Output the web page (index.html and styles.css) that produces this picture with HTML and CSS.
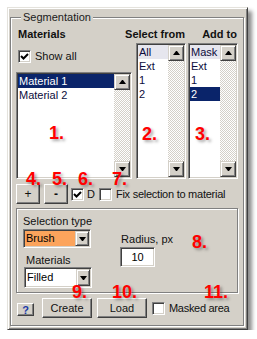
FILE: index.html
```html
<!DOCTYPE html>
<html>
<head>
<meta charset="utf-8">
<link rel="stylesheet" href="styles.css">
</head>
<body>
<div class="window">
  <div class="group">
    <div class="legend">Segmentation</div>
    <div class="top">
      <div class="col col-mat">
        <div class="hdr">Materials</div>
        <div class="chk-row show-all"><span class="cb"><svg width="9" height="9" viewBox="0 0 9 9"><path d="M1 4 L3.5 6.5 L8 2" fill="none" stroke="#000" stroke-width="2"/></svg></span><span class="chk-text">Show all</span></div>
        <div class="listbox lb-mat">
          <div class="items">
            <div class="item sel">Material 1</div>
            <div class="item">Material 2</div>
          </div>
          <div class="sb"><div class="sbtn"><span class="arr-up"></span></div><div class="track"></div><div class="sbtn"><span class="arr-down"></span></div></div>
        </div>
      </div>
      <div class="col col-sm">
        <div class="hdr hdr-r">Select from</div>
        <div class="listbox lb-r">
          <div class="items">
            <div class="item faint">All</div>
            <div class="item">Ext</div>
            <div class="item">1</div>
            <div class="item">2</div>
          </div>
          <div class="sb"><div class="sbtn"><span class="arr-up"></span></div><div class="track"></div><div class="sbtn"><span class="arr-down"></span></div></div>
        </div>
      </div>
      <div class="col col-at">
        <div class="hdr hdr-r">Add to</div>
        <div class="listbox lb-r">
          <div class="items">
            <div class="item faint">Mask</div>
            <div class="item">Ext</div>
            <div class="item">1</div>
            <div class="item sel">2</div>
          </div>
          <div class="sb"><div class="sbtn"><span class="arr-up"></span></div><div class="track"></div><div class="sbtn"><span class="arr-down"></span></div></div>
        </div>
      </div>
    </div>
    <div class="btnrow">
      <div class="btn btn-sq">+</div>
      <div class="btn btn-sq btn-minus">-</div>
      <span class="cb cb-d"><svg width="9" height="9" viewBox="0 0 9 9"><path d="M1 4 L3.5 6.5 L8 2" fill="none" stroke="#000" stroke-width="2"/></svg></span>
      <span class="chk-text d-text">D</span>
      <span class="cb cb-fix"></span>
      <span class="chk-text fix-text">Fix selection to material</span>
    </div>
    <div class="inner">
      <div class="inner-left">
        <div class="lbl">Selection type</div>
        <div class="combo combo-brush"><span class="combo-val">Brush</span><div class="cbtn"><span class="arr-down"></span></div></div>
        <div class="lbl lbl-mat">Materials</div>
        <div class="combo combo-filled"><span class="combo-val">Filled</span><div class="cbtn"><span class="arr-down"></span></div></div>
      </div>
      <div class="inner-right">
        <div class="lbl lbl-rad">Radius, px</div>
        <div class="input">10</div>
      </div>
    </div>
    <div class="bottom">
      <div class="btn btn-help">?</div>
      <div class="btn btn-wide btn-create">Create</div>
      <div class="btn btn-wide btn-load">Load</div>
      <div class="masked"><span class="cb"></span><span class="chk-text masked-text">Masked area</span></div>
    </div>
  </div>
  <div class="notes">
    <span class="note n1">1.</span>
    <span class="note n2">2.</span>
    <span class="note n3">3.</span>
    <span class="note n4">4.</span>
    <span class="note n5">5.</span>
    <span class="note n6">6.</span>
    <span class="note n7">7.</span>
    <span class="note n8">8.</span>
    <span class="note n9">9.</span>
    <span class="note n10">10.</span>
    <span class="note n11">11.</span>
  </div>
</div>
</body>
</html>
```
FILE: styles.css
```css
html, body {
  margin: 0;
  padding: 0;
  background: #ffffff;
}
body {
  font-family: "Liberation Sans", Arial, sans-serif;
  font-size: 11px;
  color: #000;
}
.window {
  position: relative;
  box-sizing: border-box;
  margin: 7px 0 0 7px;
  width: 241px;
  height: 323px;
  background: #d4d0c8;
  border: 1px solid;
  border-color: #e4e2dc #404040 #404040 #e4e2dc;
  box-shadow: inset 1px 1px 0 #fff, inset -1px -1px 0 #808080, 4px 4px 4px rgba(0,0,0,0.45);
  padding: 9px 2px 0 2px;
}
.group {
  box-sizing: border-box;
  width: 234px;
  height: 309px;
  border: 1px solid #808080;
  box-shadow: inset 1px 1px 0 #fff, 1px 1px 0 #fff;
  display: flex;
  flex-direction: column;
  align-items: flex-start;
}
.legend {
  margin-top: -7px;
  margin-left: 10px;
  padding: 0 2px;
  line-height: 13px;
  background: #d4d0c8;
  color: #1a1a1a;
}
.top {
  margin-top: 4px;
  padding-left: 5px;
  display: flex;
  align-items: flex-end;
}
.col {
  display: flex;
  flex-direction: column;
}
.col-mat { width: 116px; }
.col-sm { width: 50px; margin-left: 4px; }
.col-at { width: 50px; margin-left: 2px; }
.hdr {
  font-weight: bold;
  line-height: 13px;
  white-space: nowrap;
  color: #111;
}
.col-mat .hdr { padding-left: 2px; }
.hdr-r {
  display: flex;
  justify-content: flex-end;
  padding-right: 1px;
}
.chk-row {
  display: flex;
  align-items: center;
  height: 13px;
}
.show-all {
  margin-top: 9px;
  margin-left: 2px;
}
.cb {
  box-sizing: border-box;
  width: 13px;
  height: 13px;
  flex: none;
  background: #fff;
  border: 1px solid;
  border-color: #808080 #fff #fff #808080;
  box-shadow: inset 1px 1px 0 #404040, inset -1px -1px 0 #d4d0c8;
  display: flex;
  align-items: center;
  justify-content: center;
}
.cb svg { display: block; }
.chk-text {
  line-height: 13px;
  white-space: nowrap;
  color: #111;
}
.show-all .chk-text { margin-left: 4px; }

.listbox {
  box-sizing: border-box;
  display: flex;
  border: 1px solid;
  border-color: #808080 #fff #fff #808080;
  box-shadow: inset 1px 1px 0 #404040, inset -1px -1px 0 #d4d0c8;
  padding: 1px;
}
.lb-mat { margin-top: 9px; height: 107px; width: 116px; }
.lb-r { margin-top: 2px; height: 136px; width: 50px; }
.items {
  flex: 1;
  background: #fff;
  overflow: hidden;
}
.item {
  height: 14px;
  line-height: 14px;
  padding-left: 1px;
  white-space: nowrap;
  color: #0c0c3c;
}
.item.sel {
  background: #0a246a;
  color: #fff;
}
.item.faint {
  background: #e6e6ee;
}
.sb {
  width: 16px;
  display: flex;
  flex-direction: column;
}
.track {
  flex: 1;
  background-color: #fff;
  background-image: conic-gradient(#d4d0c8 25%, #fff 0 50%, #d4d0c8 0 75%, #fff 0);
  background-size: 2px 2px;
}
.sbtn, .cbtn {
  box-sizing: border-box;
  width: 16px;
  height: 16px;
  background: #d4d0c8;
  border: 1px solid;
  border-color: #d4d0c8 #404040 #404040 #d4d0c8;
  box-shadow: inset 1px 1px 0 #fff, inset -1px -1px 0 #808080;
  display: flex;
  align-items: center;
  justify-content: center;
}
.arr-up, .arr-down {
  width: 1px;
  height: 0;
  border-left: 3px solid transparent;
  border-right: 3px solid transparent;
}
.arr-up { border-bottom: 4px solid #000; }
.arr-down { border-top: 4px solid #000; }

.btnrow {
  margin-top: 5px;
  padding-left: 5px;
  height: 20px;
  display: flex;
  align-items: center;
}
.btn {
  box-sizing: border-box;
  background: #d4d0c8;
  border: 1px solid;
  border-color: #fff #404040 #404040 #fff;
  box-shadow: inset -1px -1px 0 #808080;
  display: flex;
  align-items: center;
  justify-content: center;
  color: #111;
  white-space: nowrap;
}
.btn-sq { width: 24px; height: 20px; font-size: 12px; }
.btn-minus { margin-left: 4px; font-weight: bold; }
.cb-d { margin-left: 3px; }
.d-text { margin-left: 3px; }
.cb-fix { margin-left: 4px; }
.fix-text { margin-left: 4px; letter-spacing: -0.25px; }

.inner {
  box-sizing: border-box;
  margin-top: 4px;
  margin-left: 5px;
  width: 222px;
  height: 85px;
  border: 1px solid #808080;
  box-shadow: inset 1px 1px 0 #fff, 1px 1px 0 #fff;
  padding: 6px 0 0 6px;
  display: flex;
  align-items: flex-start;
}
.inner-left {
  display: flex;
  flex-direction: column;
  align-items: flex-start;
}
.lbl {
  line-height: 13px;
  white-space: nowrap;
  color: #111;
}
.lbl-mat { margin-top: 6px; margin-left: 3px; }
.combo {
  box-sizing: border-box;
  width: 68px;
  display: flex;
  align-items: center;
  border: 1px solid;
  border-color: #808080 #fff #fff #808080;
  box-shadow: inset 1px 1px 0 #404040, inset -1px -1px 0 #d4d0c8;
  padding: 1px;
}
.combo-brush {
  margin-top: 1px;
  height: 19px;
  background: #fca45c;
}
.combo-filled {
  margin-left: 1px;
  height: 21px;
  background: #fff;
}
.combo-val {
  flex: 1;
  padding-left: 1px;
  line-height: 13px;
}
.cbtn { width: 14px; height: 100%; }
.inner-right {
  margin-left: 28px;
  margin-top: 18px;
  display: flex;
  flex-direction: column;
  align-items: flex-start;
}
.lbl-rad { margin-left: 1px; }
.input {
  box-sizing: border-box;
  margin-top: 1px;
  width: 35px;
  height: 20px;
  background: #fff;
  border: 1px solid;
  border-color: #808080 #fff #fff #808080;
  box-shadow: inset 1px 1px 0 #404040, inset -1px -1px 0 #d4d0c8;
  display: flex;
  align-items: center;
  justify-content: center;
}

.bottom {
  margin-top: 5px;
  padding-left: 6px;
  display: flex;
  align-items: flex-start;
}
.btn-help {
  margin-top: 5px;
  width: 17px;
  height: 13px;
  color: #1a3aa8;
  font-weight: bold;
  font-size: 11px;
}
.btn-wide { width: 50px; height: 20px; }
.btn-create { margin-left: 8px; }
.btn-load { margin-left: 5px; }
.masked {
  margin-left: 5px;
  margin-top: 4px;
  display: flex;
  align-items: flex-start;
}
.masked-text { margin-left: 4px; letter-spacing: -0.3px; }

.notes {
  position: absolute;
  inset: 0;
  pointer-events: none;
}
.note {
  position: absolute;
  font-family: "Liberation Sans", Arial, sans-serif;
  font-weight: bold;
  font-size: 18px;
  line-height: 18px;
  color: #ff0000;
  text-shadow: 2px 2px 3px rgba(0,0,0,0.35);
}
.n1 { left: 41px; top: 116px; }
.n2 { left: 134px; top: 117px; }
.n3 { left: 187px; top: 117px; }
.n4 { left: 18px; top: 162px; }
.n5 { left: 44px; top: 162px; }
.n6 { left: 70px; top: 162px; }
.n7 { left: 104px; top: 162px; }
.n8 { left: 184px; top: 225px; }
.n9 { left: 64px; top: 275px; }
.n10 { left: 104px; top: 275px; }
.n11 { left: 196px; top: 275px; }
```
